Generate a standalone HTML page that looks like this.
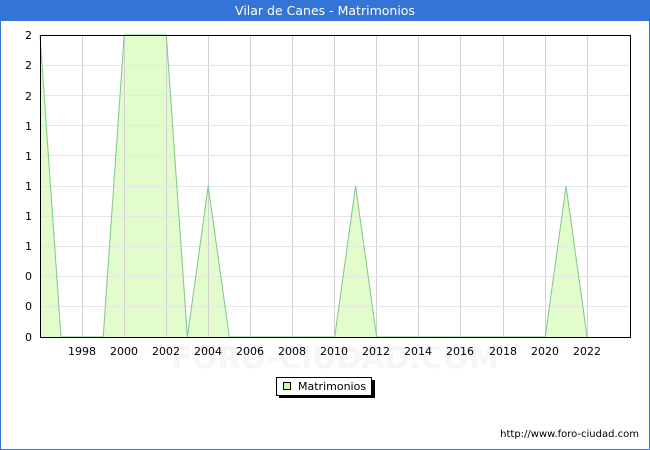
<!DOCTYPE html>
<html><head><meta charset="utf-8"><style>
html,body{margin:0;padding:0;background:#fff}
body{width:650px;height:450px;position:relative;overflow:hidden;font-family:"DejaVu Sans","Liberation Sans",sans-serif}
</style></head><body>
<svg width="650" height="450" xmlns="http://www.w3.org/2000/svg" style="position:absolute;left:0;top:0">
<rect x="0.5" y="0.5" width="649" height="449" fill="#fff" stroke="#3474d6"/>
<rect x="0" y="0" width="650" height="21" fill="#3474d6"/>
<text x="325" y="15" text-anchor="middle" fill="#fff" font-size="12.5" font-family="DejaVu Sans, sans-serif">Vilar de Canes - Matrimonios</text>
<text x="335" y="368" text-anchor="middle" fill="#f6f6f6" font-size="30" font-weight="bold">FORO-CIUDAD.COM</text>
<polygon points="40,35 61,337 103.2,337 124.2,35 166.3,35 187.4,337 208.2,186 229.3,337 334.7,337 355.6,186 376.6,337 545.2,337 566.1,186 587.1,337 40,337" fill="#e2fccc" stroke="none"/>
<g stroke="#d0d0d0" stroke-width="1">
<line x1="82.5" y1="35" x2="82.5" y2="337"/><line x1="124.5" y1="35" x2="124.5" y2="337"/><line x1="166.5" y1="35" x2="166.5" y2="337"/><line x1="208.5" y1="35" x2="208.5" y2="337"/><line x1="250.5" y1="35" x2="250.5" y2="337"/><line x1="292.5" y1="35" x2="292.5" y2="337"/><line x1="334.5" y1="35" x2="334.5" y2="337"/><line x1="376.5" y1="35" x2="376.5" y2="337"/><line x1="418.5" y1="35" x2="418.5" y2="337"/><line x1="460.5" y1="35" x2="460.5" y2="337"/><line x1="503.5" y1="35" x2="503.5" y2="337"/><line x1="545.5" y1="35" x2="545.5" y2="337"/><line x1="587.5" y1="35" x2="587.5" y2="337"/>
</g>
<g stroke="#e6e6e6" stroke-width="1">
<line x1="40" y1="65.5" x2="630" y2="65.5"/><line x1="40" y1="95.5" x2="630" y2="95.5"/><line x1="40" y1="125.5" x2="630" y2="125.5"/><line x1="40" y1="155.5" x2="630" y2="155.5"/><line x1="40" y1="186.5" x2="630" y2="186.5"/><line x1="40" y1="216.5" x2="630" y2="216.5"/><line x1="40" y1="246.5" x2="630" y2="246.5"/><line x1="40" y1="276.5" x2="630" y2="276.5"/><line x1="40" y1="306.5" x2="630" y2="306.5"/>
</g>
<polyline points="40,35 61,337 103.2,337 124.2,35 166.3,35 187.4,337 208.2,186 229.3,337 334.7,337 355.6,186 376.6,337 545.2,337 566.1,186 587.1,337" fill="none" stroke="#7cc88a" stroke-width="1"/>
<rect x="40.5" y="35.5" width="590" height="302" fill="none" stroke="#000"/>
<g font-size="11" fill="#000" text-anchor="end">
<text x="32" y="39">2</text><text x="32" y="69">2</text><text x="32" y="100">2</text><text x="32" y="130">1</text><text x="32" y="160">1</text><text x="32" y="190">1</text><text x="32" y="220">1</text><text x="32" y="250">1</text><text x="32" y="280">0</text><text x="32" y="310">0</text><text x="32" y="341">0</text>
</g>
<g font-size="11" fill="#000" text-anchor="middle">
<text x="82" y="355">1998</text><text x="124" y="355">2000</text><text x="166" y="355">2002</text><text x="208" y="355">2004</text><text x="250" y="355">2006</text><text x="292" y="355">2008</text><text x="334" y="355">2010</text><text x="376" y="355">2012</text><text x="418" y="355">2014</text><text x="460" y="355">2016</text><text x="503" y="355">2018</text><text x="545" y="355">2020</text><text x="587" y="355">2022</text>
</g>
<rect x="279" y="380" width="96" height="18" fill="#000"/>
<rect x="276.5" y="377.5" width="95" height="18" fill="#fff" stroke="#000"/>
<rect x="283.5" y="382.5" width="7" height="7" fill="#ccf5a8" stroke="#000"/>
<text x="298" y="390" font-size="11" fill="#000">Matrimonios</text>
<text x="639" y="437" text-anchor="end" font-size="10" fill="#000">http://www.foro-ciudad.com</text>
</svg>
</body></html>
